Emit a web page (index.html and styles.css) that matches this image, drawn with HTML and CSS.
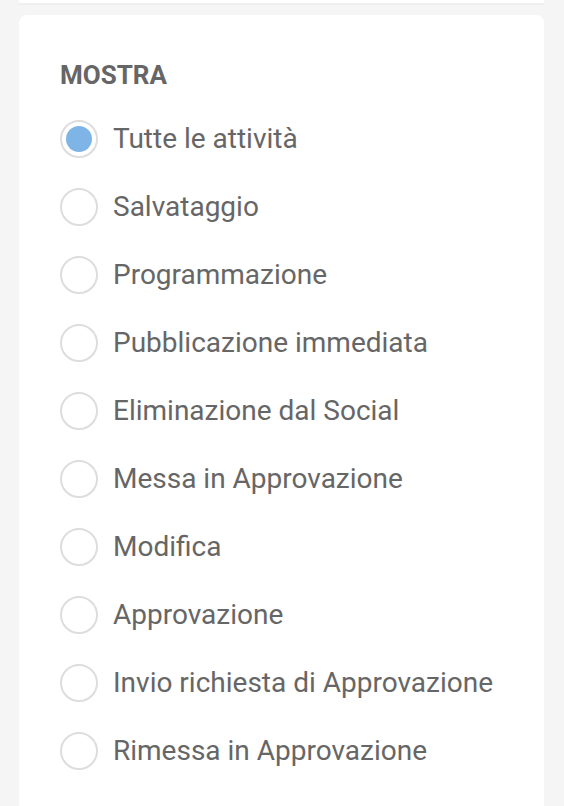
FILE: index.html
```html
<!DOCTYPE html>
<html lang="it">
<head>
<meta charset="utf-8">
<title>Mostra</title>
<link rel="stylesheet" href="styles.css">
</head>
<body>
<div class="prev-card"></div>
<section class="card">
  <h2 class="title">MOSTRA</h2>
  <ul class="options">
    <li class="option"><span class="radio checked"></span><span class="label">Tutte le attività</span></li>
    <li class="option"><span class="radio"></span><span class="label">Salvataggio</span></li>
    <li class="option"><span class="radio"></span><span class="label">Programmazione</span></li>
    <li class="option"><span class="radio"></span><span class="label">Pubblicazione immediata</span></li>
    <li class="option"><span class="radio"></span><span class="label">Eliminazione dal Social</span></li>
    <li class="option"><span class="radio"></span><span class="label">Messa in Approvazione</span></li>
    <li class="option"><span class="radio"></span><span class="label">Modifica</span></li>
    <li class="option"><span class="radio"></span><span class="label">Approvazione</span></li>
    <li class="option"><span class="radio"></span><span class="label">Invio richiesta di Approvazione</span></li>
    <li class="option"><span class="radio"></span><span class="label">Rimessa in Approvazione</span></li>
  </ul>
</section>
</body>
</html>
```

FILE: styles.css
```css
html, body {
  margin: 0;
  padding: 0;
  background: #f5f5f5;
  font-family: Roboto, "Liberation Sans", sans-serif;
  color: #666666;
  overflow: hidden;
}
.prev-card {
  height: 3px;
  margin: 0 20px 0 19px;
  background: #ffffff;
  border-bottom: 2px solid #efefef;
}
.card {
  margin: 10px 20px 0 19px;
  background: #ffffff;
  border-radius: 8px;
  padding: 46px 41px 40px 41px;
  min-height: 900px;
}
.title {
  margin: 0;
  font-size: 26px;
  font-weight: 700;
  line-height: 28px;
  color: #666666;
}
.options {
  list-style: none;
  margin: 31px 0 0 0;
  padding: 0;
  display: flex;
  flex-direction: column;
  gap: 30px;
}
.option {
  display: flex;
  align-items: center;
  gap: 15px;
  height: 38px;
}
.radio {
  box-sizing: border-box;
  width: 38px;
  height: 38px;
  flex: none;
  border-radius: 50%;
  border: 2px solid #dddddd;
  background: #ffffff;
  position: relative;
}
.radio.checked::after {
  content: "";
  position: absolute;
  inset: 4px;
  border-radius: 50%;
  background: #7eb5e6;
}
.label {
  font-size: 28px;
  line-height: 38px;
  color: #666666;
}
```
